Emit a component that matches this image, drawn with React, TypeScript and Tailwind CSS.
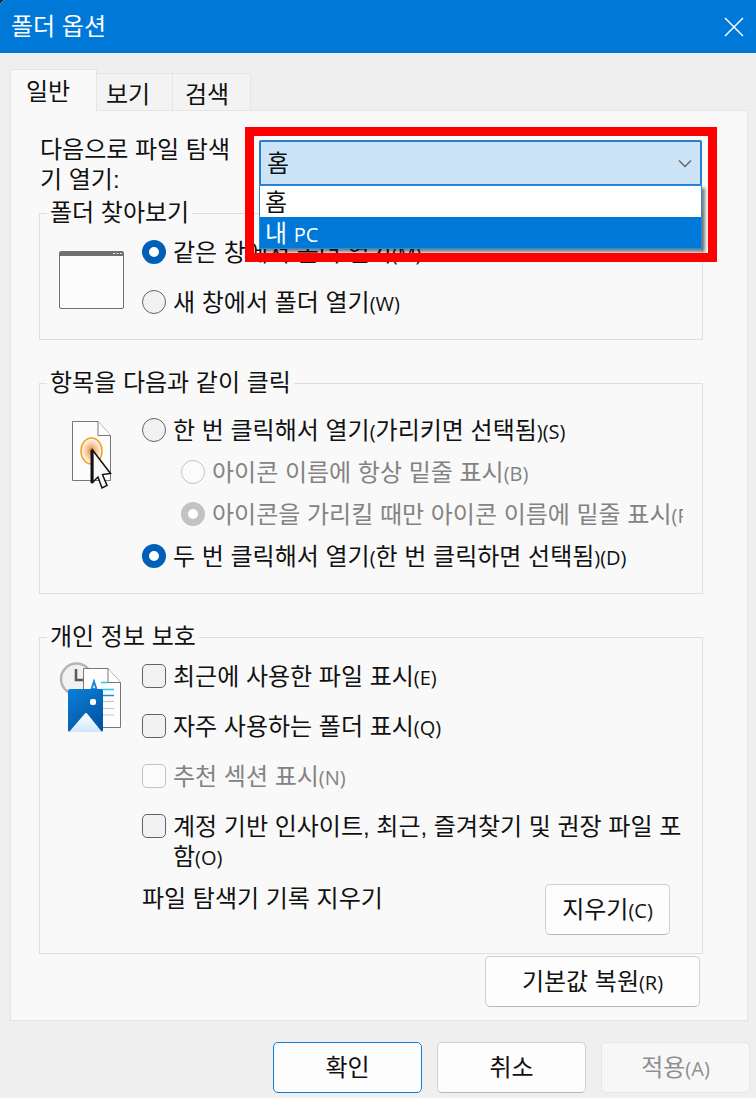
import { useState } from "react";
import type { ReactNode } from "react";
import clsx from "clsx";

// Latin letters and brackets sit a little smaller than the Hangul around them
const Mixed = ({ text }: { text: string }) => (
  <>
    {text.split(/([A-Z()]+)/).map((part, i) =>
      i % 2 ? (
        <span key={i} className="font-['Open_Sans','Noto_Sans',sans-serif] text-[20px] leading-[20px]">
          {part}
        </span>
      ) : (
        part
      )
    )}
  </>
);

const WindowIcon = () => (
  <svg width="65" height="58" viewBox="0 0 65 58" fill="none" aria-hidden="true">
    <rect x="0.5" y="0.5" width="64" height="57" rx="1.5" fill="#fbfbfb" stroke="#70706e" />
    <path d="M1 1h63v4H1z" fill="#70706e" />
    <path d="M54 2.5h2M57.500 2.500h2M61 2.500h2" stroke="#e4e4e4" />
  </svg>
);

const ClickIcon = () => (
  <svg width="42" height="70" viewBox="0 0 42 70" fill="none" aria-hidden="true">
    <defs>
      <radialGradient id="glow">
        <stop offset="0" stopColor="#d9751c" />
        <stop offset="0.350" stopColor="#f3b67c" />
        <stop offset="0.900" stopColor="#fdf6ee" />
      </radialGradient>
    </defs>
    <path d="M1.500 1.500H27L39.500 15.500V60.500H1.500Z" fill="#fcfcfc" stroke="#777" />
    <path d="M27 1.500V15.500H39.500" fill="#fff" stroke="#777" />
    <ellipse cx="20.500" cy="31" rx="10.500" ry="13" fill="url(#glow)" stroke="#f5a01e" strokeWidth="1.500" />
    <path d="M21.500 30L39.500 53.500L31.500 54.500L36 65.500L31 68L27 57L21.500 62.500Z" fill="#f7f7f7" stroke="#111" strokeWidth="1.500" />
    <path d="M21 30V63" stroke="#111" strokeWidth="3" />
  </svg>
);

const PrivacyIcon = () => (
  <svg width="63" height="74" viewBox="0 0 63 74" fill="none" aria-hidden="true">
    <defs>
      <linearGradient id="photo" x2="0.600" y2="1">
        <stop offset="0" stopColor="#0a80dc" />
        <stop offset="1" stopColor="#0455a0" />
      </linearGradient>
      <linearGradient id="hill" x2="0" y2="1">
        <stop offset="0" stopColor="#fff" />
        <stop offset="1" stopColor="#cfe6fb" />
      </linearGradient>
    </defs>
    <circle cx="17.500" cy="18" r="15.500" fill="#f1f1f1" stroke="#b4b4b4" strokeWidth="2.500" />
    <path d="M17 8V19H24" stroke="#5a5a5a" strokeWidth="2.500" />
    <path d="M24.500 7.500H49L61.500 21.500V66.500H24.500Z" fill="#fdfdfd" stroke="#777" />
    <path d="M49 7.500V21.500H61.500" fill="#fff" stroke="#777" />
    <path d="M31 33L35 20.500L39 33M33 28H37" stroke="#1f86d8" strokeWidth="2" />
    <path d="M42 21.500H49M42 28.500H55" stroke="#2fc3f7" strokeWidth="1.500" />
    <path d="M42 34.500H55" stroke="#2288dd" strokeWidth="1.500" />
    <path d="M42 40.500H55M42 47.500H55M42 54H55" stroke="#c4c4c4" />
    <rect x="9" y="28" width="35" height="43" rx="2" fill="url(#photo)" />
    <rect x="31" y="38" width="6" height="6" rx="2" fill="#fff" />
    <path d="M10 71L25.500 53Q27 51 28.500 53L43 71Z" fill="url(#hill)" />
  </svg>
);

type ChoiceProps = {
  type: "radio" | "checkbox";
  name: string;
  label: string;
  checked?: boolean;
  disabled?: boolean;
  indent?: boolean;
  onSelect?: () => void;
};

const Choice = ({ type, name, label, checked, disabled, indent, onSelect }: ChoiceProps) => (
  <label
    className={clsx(
      "flex items-start gap-[7px]",
      indent && "ml-[39px] mr-[7px] overflow-hidden whitespace-nowrap",
      disabled && "text-[#838383]"
    )}
  >
    <input
      type={type}
      name={name}
      checked={type === "radio" ? !!checked : undefined}
      onChange={onSelect}
      disabled={disabled}
      className={clsx(
        "mt-[2px] size-6 shrink-0 appearance-none border",
        type === "radio"
          ? "rounded-full checked:border-[7px] checked:bg-white"
          : "rounded-[5px] checked:bg-[#005fb8]",
        disabled
          ? "border-[#c3c3c3] bg-[#fbfbfb]"
          : "border-[#636363] bg-[#f2f2f2] checked:border-[#005fb8]"
      )}
    />
    <span>
      <Mixed text={label} />
    </span>
  </label>
);

const Group = ({ title, className, children }: { title: string; className: string; children: ReactNode }) => (
  <fieldset className={clsx("min-w-0 border border-[#dfdfdf] pl-[19px] pr-[12px]", className)}>
    <legend className="-ml-[12px] px-[3px]">{title}</legend>
    {children}
  </fieldset>
);

type DialogButtonProps = {
  label: string;
  width: string;
  variant?: "normal" | "primary";
  disabled?: boolean;
};

const DialogButton = ({ label, width, variant = "normal", disabled }: DialogButtonProps) => (
  <button
    type="button"
    disabled={disabled}
    className={clsx(
      "h-[51px] rounded-[5px] border pt-px text-center",
      width,
      disabled && "border-[#e6e6e6] bg-[#f7f7f7] text-[#8f8f8f]",
      !disabled && variant === "normal" && "border-[#d0d0d0] border-b-[#b8b8b8] bg-[#fdfdfd]",
      !disabled && variant === "primary" && "border-[#0f7fd9] bg-[#fdfdfd]"
    )}
  >
    <Mixed text={label} />
  </button>
);

const targets = ["홈", "내 PC"];

const OpenTarget = () => {
  const [target, setTarget] = useState(targets[0]);

  return (
    <div className="relative mt-[5px] h-[46px] flex-1">
      <select
        id="open-target"
        value={target}
        onChange={(e) => setTarget(e.target.value)}
        className="h-full w-full appearance-none rounded-[2px] border-2 border-[#2b7cc9] bg-[#cce4f7] pl-[6px] pt-[2px]"
      >
        {targets.map((t) => (
          <option key={t}>{t}</option>
        ))}
      </select>
      <svg className="pointer-events-none absolute right-[9px] top-[19px]" width="16" height="10" viewBox="0 0 16 10" fill="none" aria-hidden="true">
        <path d="M2 1.500L8 7.500L14 1.500" stroke="#666" strokeWidth="1.500" />
      </svg>
      <ul role="listbox" className="absolute inset-x-0 top-[45px] z-10 border border-[#2b8ae0] bg-white shadow-[3px_3px_3px_rgba(0,0,0,0.5)]">
        {targets.map((t) => (
          <li
            key={t}
            role="option"
            aria-selected={t === "내 PC"}
            onClick={() => setTarget(t)}
            className="h-[31px] pl-[5px] leading-[34px] aria-selected:bg-[#0078d7] aria-selected:text-white"
          >
            <Mixed text={t} />
          </li>
        ))}
      </ul>
      {/* highlight frame around the open list */}
      <div className="pointer-events-none absolute -left-[14px] -right-[15px] -top-[13px] z-20 h-[135px] border-[9px] border-[#ff0000]" />
    </div>
  );
};

const App = () => {
  const [browse, setBrowse] = useState("same");
  const [click, setClick] = useState("double");

  return (
    <div className="bg-[#222] font-['Liberation_Sans','Noto_Sans_CJK_KR',sans-serif] text-[24px] leading-[30px] text-[#111]">
      <main className="min-h-screen rounded-tl-[6px] bg-[#efefef]">
        <header className="flex h-[53px] items-center justify-between rounded-tl-[6px] bg-[#0078d7] pl-[11px] pr-3 text-white">
          <h1>폴더 옵션</h1>
          <button type="button" aria-label="닫기">
            <svg width="20" height="20" viewBox="0 0 20 20" fill="none" aria-hidden="true">
              <path d="M1 1L19 19M19 1L1 19" stroke="#fff" strokeWidth="1.500" />
            </svg>
          </button>
        </header>

        <div className="pl-[10px] pr-2 pt-4">
          <div role="tablist" className="relative -mb-px flex items-end">
            <button type="button" role="tab" aria-selected="true" className="h-[42px] w-[87px] border border-b-0 border-[#e5e5e5] bg-[#f9f9f9] pl-[15px] pt-[2px] text-left">
              일반
            </button>
            <button type="button" role="tab" aria-selected="false" className="h-[38px] w-[76px] border border-l-0 border-[#e5e5e5] bg-[#f3f3f3] pl-[9px] pt-[6px] text-left">
              보기
            </button>
            <button type="button" role="tab" aria-selected="false" className="h-[38px] w-[78px] border border-l-0 border-[#e5e5e5] bg-[#f3f3f3] pl-[12px] pt-[6px] text-left">
              검색
            </button>
          </div>

          <section role="tabpanel" className="border border-[#e5e5e5] bg-[#f9f9f9] pb-[13px] pl-7 pr-[44px] pt-6">
            <div className="flex gap-[14px] pr-px">
              <label htmlFor="open-target" className="w-[206px] pl-px">
                다음으로 파일 탐색기 열기:
              </label>
              <OpenTarget />
            </div>

            <Group title="폴더 찾아보기" className="mt-[3px] pb-[21px] pt-[10px]">
              <div className="flex gap-[18px]">
                <div className="mt-[13px] w-[65px] shrink-0">
                  <WindowIcon />
                </div>
                <div className="flex min-w-0 flex-1 flex-col gap-5">
                  <Choice type="radio" name="browse" label="같은 창에서 폴더 열기(M)" checked={browse === "same"} onSelect={() => setBrowse("same")} />
                  <Choice type="radio" name="browse" label="새 창에서 폴더 열기(W)" checked={browse === "new"} onSelect={() => setBrowse("new")} />
                </div>
              </div>
            </Group>

            <Group title="항목을 다음과 같이 클릭" className="mt-7 pb-[21px] pt-[18px]">
              <div className="flex gap-[18px]">
                <div className="mt-1 flex w-[65px] shrink-0 justify-center">
                  <ClickIcon />
                </div>
                <div className="flex min-w-0 flex-1 flex-col gap-3">
                  <Choice type="radio" name="click" label="한 번 클릭해서 열기(가리키면 선택됨)(S)" checked={click === "single"} onSelect={() => setClick("single")} />
                  <Choice type="radio" name="underline" label="아이콘 이름에 항상 밑줄 표시(B)" indent disabled />
                  <Choice type="radio" name="underline" label="아이콘을 가리킬 때만 아이콘 이름에 밑줄 표시(P)" indent disabled checked />
                  <Choice type="radio" name="click" label="두 번 클릭해서 열기(한 번 클릭하면 선택됨)(D)" checked={click === "double"} onSelect={() => setClick("double")} />
                </div>
              </div>
            </Group>

            <Group title="개인 정보 보호" className="mt-7 pb-[18px] pt-[10px]">
              <div className="flex gap-[18px]">
                <div className="-mt-px w-[65px] shrink-0">
                  <PrivacyIcon />
                </div>
                <div className="flex min-w-0 flex-1 flex-col gap-5">
                  <Choice type="checkbox" name="recent" label="최근에 사용한 파일 표시(E)" />
                  <Choice type="checkbox" name="frequent" label="자주 사용하는 폴더 표시(Q)" />
                  <Choice type="checkbox" name="recommended" label="추천 섹션 표시(N)" disabled />
                  <Choice type="checkbox" name="insights" label="계정 기반 인사이트, 최근, 즐겨찾기 및 권장 파일 포함(O)" />
                </div>
              </div>
              <div className="mt-3 flex items-start justify-between pl-[83px] pr-5">
                <p>파일 탐색기 기록 지우기</p>
                <DialogButton label="지우기(C)" width="w-[125px]" />
              </div>
            </Group>

            <div className="mt-[2px] flex justify-end pr-[3px]">
              <DialogButton label="기본값 복원(R)" width="w-[215px]" />
            </div>
          </section>
        </div>

        <footer className="flex justify-end gap-[15px] pb-[5px] pr-[6px] pt-[21px]">
          <DialogButton label="확인" width="w-[149px]" variant="primary" />
          <DialogButton label="취소" width="w-[149px]" />
          <DialogButton label="적용(A)" width="w-[149px]" disabled />
        </footer>
      </main>
    </div>
  );
};

export default App;
